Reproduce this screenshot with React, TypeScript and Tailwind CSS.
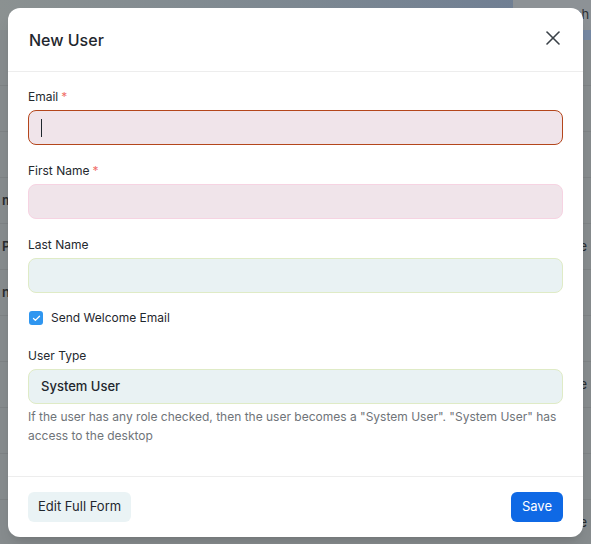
import { Check, Search, X } from 'lucide-react'

const leftRows = ['', '', '', 'm', 'P', 'n', '', '', '', '', '']
const rightRows = ['', '', '', '', '@e', '@', 'm', '@e', 'm', 'm', '@e']

function Field({
  label,
  required,
  tone,
  focused,
  children,
}: {
  label: string
  required?: boolean
  tone: 'pink' | 'blue'
  focused?: boolean
  children?: React.ReactNode
}) {
  const box =
    tone === 'pink'
      ? focused
        ? 'bg-[#f0e4ea] border-[#b4461c]'
        : 'bg-[#f0e4ea] border-[#f6d3e2]'
      : 'bg-[#e9f2f3] border-[#dfebc6]'
  return (
    <div>
      <div className="text-[12px] text-[#24292e] leading-4 mb-[5px]">
        {label}
        {required && <span className="text-[#f0706a] ml-[3px]">*</span>}
      </div>
      <div className={`h-[35px] rounded-[8px] border flex items-center px-3 ${box}`}>{children}</div>
    </div>
  )
}

export default function App() {
  return (
    <div
      className="relative w-[591px] h-[544px] overflow-hidden bg-[#878c8e]"
      style={{ fontFamily: 'Inter, "Noto Sans", sans-serif' }}
    >
      {/* dimmed page behind */}
      <div className="h-[30px] bg-gradient-to-r from-[#8b9191] via-[#7d8891] to-[#6c7c94] flex justify-end">
        <div className="w-[78px] bg-[#8d9296] flex items-center gap-2 pl-3 text-[13px] text-[#2c3033]">
          <Search size={13} strokeWidth={1.6} />
          Search
        </div>
      </div>
      <div className="h-[10px] flex justify-end">
        <div className="w-[78px] bg-[#7588a3]" />
      </div>
      <div className="flex justify-between">
        <div className="w-[30px]">
          {leftRows.map((t, i) => (
            <div key={i} className="h-[46px] border-b border-[#7e8385] flex items-center text-[13px] text-[#2a2d2f] pl-[2px] font-semibold">
              {t}
            </div>
          ))}
        </div>
        <div className="w-[30px]">
          {rightRows.map((t, i) => (
            <div key={i} className="h-[46px] border-b border-[#7e8385] flex items-center text-[13px] text-[#2a2d2f] pl-[6px]">
              {t}
            </div>
          ))}
        </div>
      </div>

      {/* dialog */}
      <div className="absolute left-[8px] top-[8px] w-[575px] h-[529px] bg-white rounded-[12px] shadow-lg flex flex-col">
        <div className="h-[64px] flex items-center justify-between pl-[21px] pr-[18px] border-b border-[#ededed]">
          <div className="text-[16px] font-medium text-[#1f272e]">New User</div>
          <X size={24} strokeWidth={1.6} className="text-[#3a4148] -mt-[3px]" />
        </div>

        <div className="flex-1 px-[20px] pt-[17px] flex flex-col">
          <Field label="Email" required tone="pink" focused>
            <div className="w-px h-[18px] bg-[#1f272e]" />
          </Field>
          <div className="mt-[18px]">
            <Field label="First Name" required tone="pink" />
          </div>
          <div className="mt-[18px]">
            <Field label="Last Name" tone="blue" />
          </div>

          <div className="mt-[17px] h-4 flex items-center gap-[8px]">
            <div className="w-[14px] h-[14px] rounded-[3px] bg-[#2f96f0] flex items-center justify-center ml-[1px]">
              <Check size={9} strokeWidth={3.5} className="text-white" />
            </div>
            <span className="text-[12px] text-[#1f272e]">Send Welcome Email</span>
          </div>

          <div className="mt-[22px]">
            <Field label="User Type" tone="blue">
              <span className="text-[13px] font-medium text-[#1f272e]">System User</span>
            </Field>
          </div>
          <p className="mt-[3px] text-[12px] leading-[19px] text-[#6f7479]">
            If the user has any role checked, then the user becomes a "System User". "System User" has access to the
            desktop
          </p>
        </div>

        <div className="h-[61px] border-t border-[#ededed] flex items-center justify-between px-[20px]">
          <button className="h-[30px] px-[10px] rounded-[6px] bg-[#eaf3f5] text-[13px] text-[#1f272e]">
            Edit Full Form
          </button>
          <button className="h-[30px] px-[11px] rounded-[6px] bg-[#0f69e5] text-[13px] text-white">Save</button>
        </div>
      </div>
    </div>
  )
}
